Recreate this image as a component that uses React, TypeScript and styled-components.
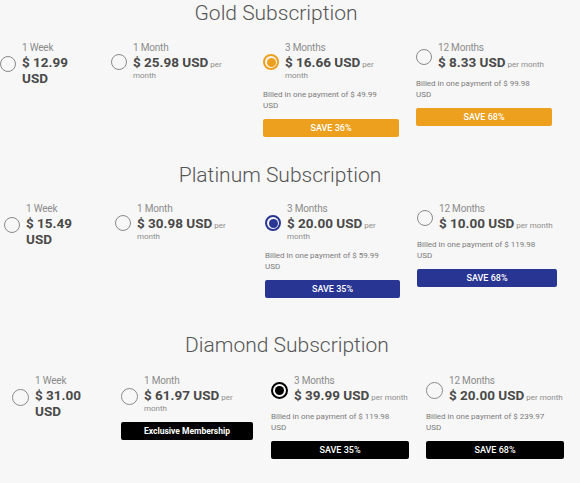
import React from "react";
import styled, { createGlobalStyle } from "styled-components";

const GlobalStyle = createGlobalStyle`
  html, body {
    margin: 0;
    padding: 0;
    background: #f7f7f7;
  }
  body {
    width: 580px;
    height: 483px;
    overflow: hidden;
    font-family: Roboto, "Liberation Sans", Arial, sans-serif;
  }
`;

interface Plan {
  label: string;
  amount: string;
  per?: string;
  priceWidth: number;
  selected?: boolean;
  shiftY?: number;
  billed?: string;
  button?: string;
  buttonWidth?: number;
  width?: number;
}

interface Tier {
  title: string;
  color: string;
  ring: number;
  dot: number;
  radioSize: number;
  top: number;
  titleShift: number;
  titleGap: number;
  padLeft: number;
  plans: Plan[];
}

const Page = styled.div`
  display: flex;
  flex-direction: column;
`;

const Section = styled.section<{ $top: number }>`
  padding-top: ${(p) => p.$top}px;
`;

const Title = styled.h2<{ $shift: number; $gap: number }>`
  margin: 0 0 ${(p) => p.$gap}px;
  padding-left: ${(p) => (p.$shift > 0 ? p.$shift * 2 : 0)}px;
  padding-right: ${(p) => (p.$shift < 0 ? -p.$shift * 2 : 0)}px;
  font-size: 21px;
  line-height: 24px;
  font-weight: 300;
  color: #555;
  text-align: center;
`;

const Row = styled.div<{ $pad: number }>`
  display: flex;
  align-items: flex-start;
  padding-left: ${(p) => p.$pad}px;
`;

const Column = styled.div<{ $w?: number }>`
  flex: ${(p) => (p.$w ? `0 0 ${p.$w}px` : "1 1 auto")};
  display: flex;
  flex-direction: column;
  align-items: flex-start;
`;

const Head = styled.div`
  display: grid;
  grid-template-columns: auto 1fr;
  column-gap: 6px;
`;

const Label = styled.div`
  grid-column: 2;
  grid-row: 1;
  font-size: 10px;
  line-height: 13px;
  letter-spacing: -0.2px;
  font-weight: 400;
  color: #8c8c8c;
`;

const Radio = styled.span<{
  $on?: boolean;
  $color: string;
  $ring: number;
  $dot: number;
  $size: number;
  $shiftY: number;
}>`
  grid-column: 1;
  grid-row: 2;
  align-self: start;
  margin-top: ${(p) => p.$shiftY}px;
  width: ${(p) => p.$size}px;
  height: ${(p) => p.$size}px;
  box-sizing: border-box;
  border-radius: 50%;
  border: ${(p) => (p.$on ? `${p.$ring}px solid ${p.$color}` : "1.5px solid #8a8a8a")};
  display: flex;
  align-items: center;
  justify-content: center;

  &::after {
    content: "";
    display: ${(p) => (p.$on ? "block" : "none")};
    width: ${(p) => p.$dot}px;
    height: ${(p) => p.$dot}px;
    border-radius: 50%;
    background: ${(p) => p.$color};
  }
`;

const Price = styled.div<{ $w: number }>`
  grid-column: 2;
  grid-row: 2;
  max-width: ${(p) => p.$w}px;
  font-size: 8px;
  line-height: 11px;
  color: #8c8c8c;
`;

const Amount = styled.span`
  font-size: 13.5px;
  line-height: 16px;
  font-weight: 700;
  color: #4a4a4a;
`;

const Billed = styled.p`
  margin: 8px 0 0;
  max-width: 130px;
  font-size: 8px;
  line-height: 11px;
  color: #7a7a7a;
`;

const Action = styled.div<{ $bg: string; $w: number; $strong?: boolean }>`
  margin-top: 8px;
  width: ${(p) => p.$w}px;
  height: 18px;
  border-radius: 2px;
  background: ${(p) => p.$bg};
  color: #fff;
  font-size: ${(p) => (p.$strong ? "8.5px" : "9px")};
  font-weight: ${(p) => (p.$strong ? 700 : 500)};
  display: flex;
  align-items: center;
  justify-content: center;
`;

const tiers: Tier[] = [
  {
    title: "Gold Subscription",
    color: "#eca01e",
    ring: 2,
    dot: 9,
    radioSize: 16,
    top: 1,
    titleShift: -14,
    titleGap: 16,
    padLeft: 0,
    plans: [
      { label: "1 Week", amount: "$ 12.99 USD", priceWidth: 66, shiftY: 2, width: 111 },
      { label: "1 Month", amount: "$ 25.98 USD", per: "per month", priceWidth: 96, width: 152 },
      {
        label: "3 Months",
        amount: "$ 16.66 USD",
        per: "per month",
        priceWidth: 96,
        selected: true,
        billed: "Billed in one payment of $ 49.99 USD",
        button: "SAVE 36%",
        buttonWidth: 136,
        width: 153,
      },
      {
        label: "12 Months",
        amount: "$ 8.33 USD",
        per: "per month",
        priceWidth: 125,
        shiftY: -5,
        billed: "Billed in one payment of $ 99.98 USD",
        button: "SAVE 68%",
        buttonWidth: 136,
      },
    ],
  },
  {
    title: "Platinum Subscription",
    color: "#283593",
    ring: 2,
    dot: 9,
    radioSize: 16,
    top: 26,
    titleShift: -10,
    titleGap: 15,
    padLeft: 4,
    plans: [
      { label: "1 Week", amount: "$ 15.49 USD", priceWidth: 66, shiftY: 2, width: 111 },
      { label: "1 Month", amount: "$ 30.98 USD", per: "per month", priceWidth: 96, width: 150 },
      {
        label: "3 Months",
        amount: "$ 20.00 USD",
        per: "per month",
        priceWidth: 96,
        selected: true,
        billed: "Billed in one payment of $ 59.99 USD",
        button: "SAVE 35%",
        buttonWidth: 135,
        width: 152,
      },
      {
        label: "12 Months",
        amount: "$ 10.00 USD",
        per: "per month",
        priceWidth: 125,
        shiftY: -5,
        billed: "Billed in one payment of $ 119.98 USD",
        button: "SAVE 68%",
        buttonWidth: 140,
      },
    ],
  },
  {
    title: "Diamond Subscription",
    color: "#000",
    ring: 2.5,
    dot: 9,
    radioSize: 17,
    top: 35,
    titleShift: -3,
    titleGap: 17,
    padLeft: 12,
    plans: [
      { label: "1 Week", amount: "$ 31.00 USD", priceWidth: 66, shiftY: 2, width: 109 },
      {
        label: "1 Month",
        amount: "$ 61.97 USD",
        per: "per month",
        priceWidth: 96,
        shiftY: 1,
        button: "Exclusive Membership",
        buttonWidth: 132,
        width: 150,
      },
      {
        label: "3 Months",
        amount: "$ 39.99 USD",
        per: "per month",
        priceWidth: 125,
        selected: true,
        shiftY: -5,
        billed: "Billed in one payment of $ 119.98 USD",
        button: "SAVE 35%",
        buttonWidth: 138,
        width: 155,
      },
      {
        label: "12 Months",
        amount: "$ 20.00 USD",
        per: "per month",
        priceWidth: 125,
        shiftY: -5,
        billed: "Billed in one payment of $ 239.97 USD",
        button: "SAVE 68%",
        buttonWidth: 138,
      },
    ],
  },
];

const PlanColumn = ({ plan, tier }: { plan: Plan; tier: Tier }) => (
  <Column $w={plan.width}>
    <Head>
      <Label>{plan.label}</Label>
      <Radio
        $on={plan.selected}
        $color={tier.color}
        $ring={tier.ring}
        $dot={tier.dot}
        $size={tier.radioSize}
        $shiftY={plan.shiftY ?? 0}
      />
      <Price $w={plan.priceWidth}>
        <Amount>{plan.amount}</Amount>
        {plan.per ? ` ${plan.per}` : null}
      </Price>
    </Head>
    {plan.billed && <Billed>{plan.billed}</Billed>}
    {plan.button && (
      <Action
        $bg={tier.color}
        $w={plan.buttonWidth ?? 136}
        $strong={!plan.billed}
      >
        {plan.button}
      </Action>
    )}
  </Column>
);

export default function App() {
  return (
    <Page>
      <GlobalStyle />
      {tiers.map((tier) => (
        <Section key={tier.title} $top={tier.top}>
          <Title $shift={tier.titleShift} $gap={tier.titleGap}>
            {tier.title}
          </Title>
          <Row $pad={tier.padLeft}>
            {tier.plans.map((plan) => (
              <PlanColumn key={plan.label} plan={plan} tier={tier} />
            ))}
          </Row>
        </Section>
      ))}
    </Page>
  );
}
